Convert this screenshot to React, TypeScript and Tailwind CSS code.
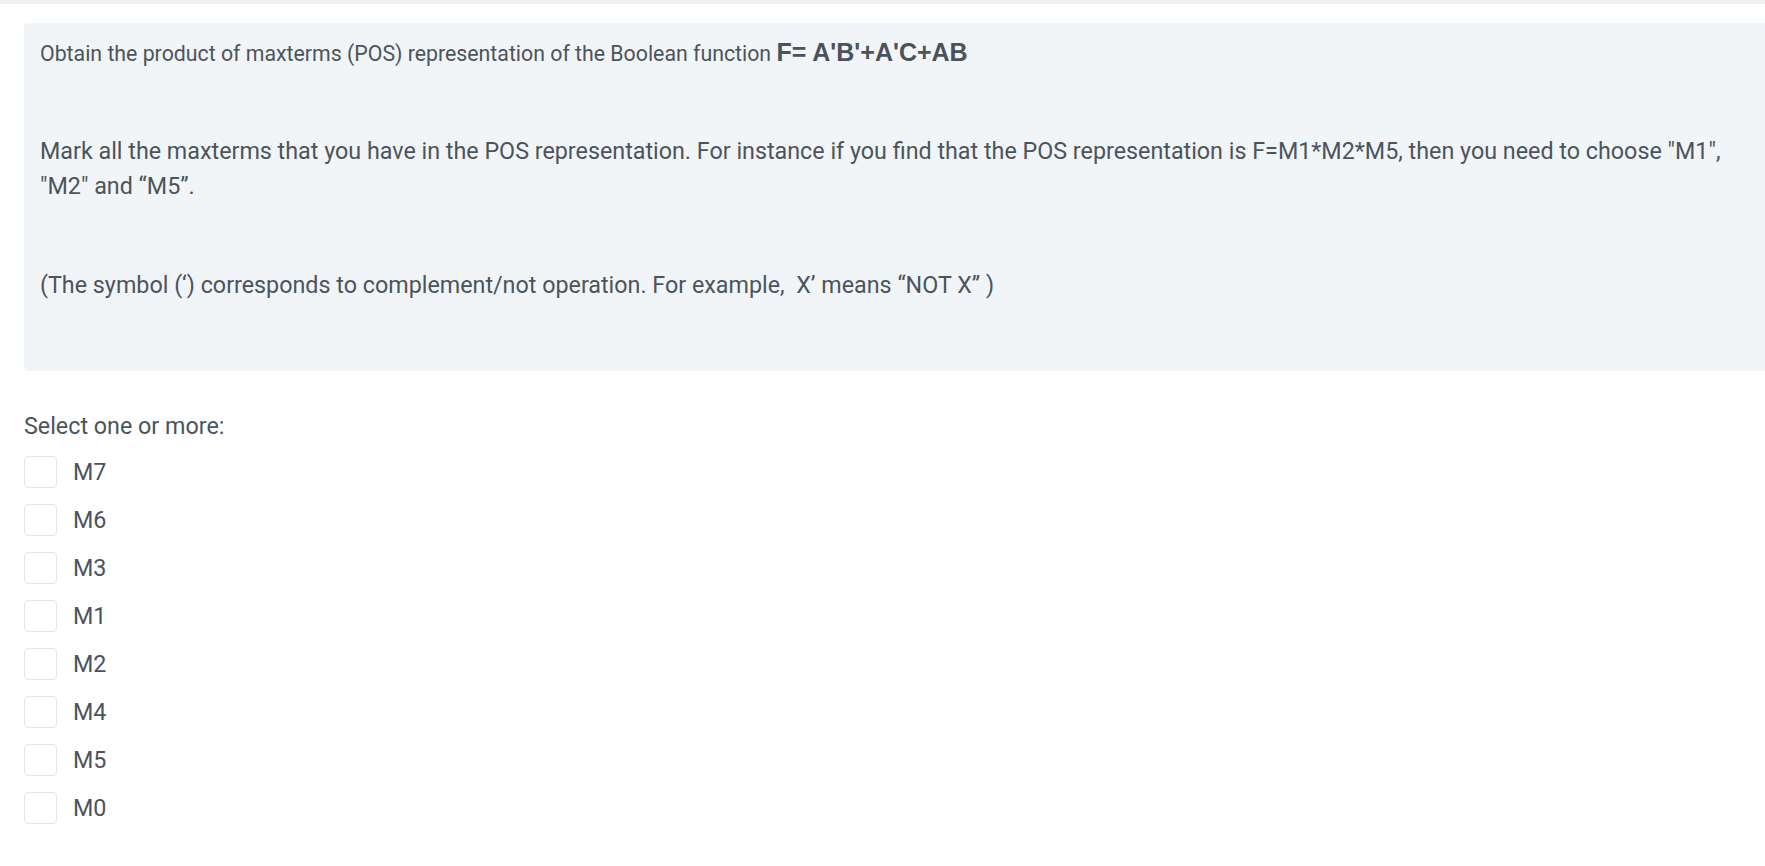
import React from 'react';

const options = ['M7', 'M6', 'M3', 'M1', 'M2', 'M4', 'M5', 'M0'];

export default function App() {
  return (
    <div className="min-h-screen w-full overflow-hidden bg-white text-[#4b545c]" style={{ fontFamily: 'Roboto, "Liberation Sans", sans-serif' }}>
      {/* top strip */}
      <div className="h-[4px] w-full bg-[#eef1f2]" />

      {/* question text */}
      <div className="ml-[24px] mt-[19px] w-[1800px] rounded-l-[4px] bg-[#f2f5f8] pl-[16px] pt-[15px] pb-[68px]">
        <p className="text-[21.3px] leading-[28px]">
          Obtain the product of maxterms (POS) representation of the Boolean function{' '}
          <strong className="text-[25px] font-bold text-[#4a535c]" style={{ fontFamily: '"Liberation Sans", Arial, sans-serif' }}>
            F= A'B'+A'C+AB
          </strong>
        </p>
        <p className="mt-[66px] w-[1700px] text-[23.3px] leading-[35px]">
          Mark all the maxterms that you have in the POS representation. For instance if you find that the POS
          representation is F=M1*M2*M5, then you need to choose "M1",
          <br />
          "M2" and “M5”.
        </p>
        <p className="mt-[64px] text-[23.3px] leading-[35px]">
          (The symbol (‘) corresponds to complement/not operation. For example,&nbsp; X’ means “NOT X” )
        </p>
      </div>

      {/* answers */}
      <div className="ml-[24px] mt-[40px]">
        <div className="text-[23.3px] leading-[30px]">Select one or more:</div>
        <div className="mt-[15px] flex flex-col gap-[16px]">
          {options.map((o) => (
            <label key={o} className="flex h-[32px] items-center gap-[16px]">
              <span className="h-[32px] w-[33px] rounded-[4px] border border-[#e2e5e9] bg-white" />
              <span className="text-[23.3px] leading-[32px]">{o}</span>
            </label>
          ))}
        </div>
      </div>
    </div>
  );
}
